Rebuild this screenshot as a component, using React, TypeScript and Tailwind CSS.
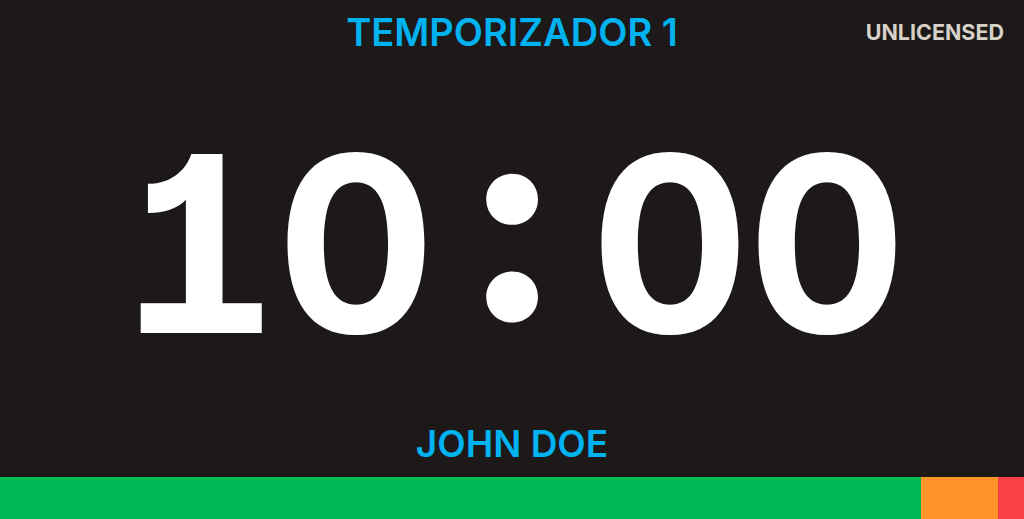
const TIME = ['1', '0', ':', '0', '0']

export default function App() {
  return (
    <div className="flex h-[519px] w-[1024px] flex-col overflow-hidden bg-[#1c1918] font-['Inter',sans-serif]">
      <header className="relative flex h-[64px] items-center justify-center">
        <h1 className="text-[38px] font-semibold leading-none text-[#00b2f0]">TEMPORIZADOR 1</h1>
        <span className="absolute right-[20px] top-[22px] text-[21.5px] font-bold leading-none text-[#d8d1c9]">
          UNLICENSED
        </span>
      </header>
      <main className="flex flex-1 items-center justify-center pt-[2px]">
        <div className="flex text-[246px] leading-[246px] text-white [font-feature-settings:'tnum','cv01','case']">
          {TIME.map((char, index) =>
            char === ':' ? (
              <span key={index} className="w-[157px] text-center text-[280px] leading-[246px] font-extrabold">
                {char}
              </span>
            ) : (
              <span key={index} className="w-[157px] text-center font-bold">
                {char}
              </span>
            ),
          )}
        </div>
      </main>
      <div className="mb-[12px] flex h-[44px] items-center justify-center">
        <span className="text-[37px] font-semibold leading-none text-[#00b2f0]">JOHN DOE</span>
      </div>
      <div className="flex h-[42px]">
        <div className="w-[921px] bg-[#00bb55]" />
        <div className="w-[77px] bg-[#ff9429]" />
        <div className="flex-1 bg-[#fb4145]" />
      </div>
    </div>
  )
}
